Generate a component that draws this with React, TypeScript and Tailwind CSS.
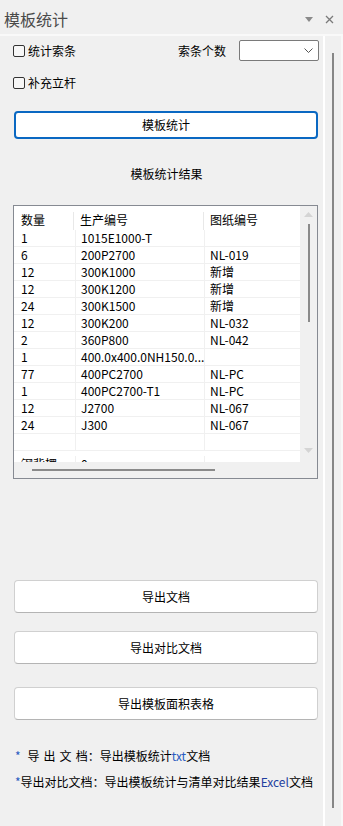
import React from "react";

const rows = [
  ["1", "1015E1000-T", ""],
  ["6", "200P2700", "NL-019"],
  ["12", "300K1000", "新增"],
  ["12", "300K1200", "新增"],
  ["24", "300K1500", "新增"],
  ["12", "300K200", "NL-032"],
  ["2", "360P800", "NL-042"],
  ["1", "400.0x400.0NH150.0...", ""],
  ["77", "400PC2700", "NL-PC"],
  ["1", "400PC2700-T1", "NL-PC"],
  ["12", "J2700", "NL-067"],
  ["24", "J300", "NL-067"],
  ["", "", ""],
];

function CheckBox({ label }: { label: string }) {
  return (
    <label className="flex items-center gap-[3px] text-[12px] leading-[16px] text-black">
      <span className="w-[12px] h-[12px] rounded-[2px] border border-[#333] bg-[#f7f7f7]" />
      <span>{label}</span>
    </label>
  );
}

function GrayButton({ label }: { label: string }) {
  return (
    <button className="w-[304px] h-[33px] rounded-[4px] bg-white border border-[#d0d0d0] border-b-[#b4b4b4] text-[12px] text-black">
      {label}
    </button>
  );
}

export default function App() {
  return (
    <div className="w-[343px] h-[826px] bg-[#f0f0f0] flex flex-col overflow-hidden font-['Noto_Sans_CJK_SC',sans-serif] text-black">
      {/* Title bar */}
      <div className="h-[34px] flex items-center pl-[4px] pr-[9px] shrink-0">
        <span className="text-[16px] leading-[20px] text-[#4a4a4a] pt-[4px]">模板统计</span>
        <div className="ml-auto flex items-center gap-[12px] pt-[4px]">
          <svg width="8" height="5" viewBox="0 0 8 5">
            <path d="M0 0 L8 0 L4 5 Z" fill="#8a8a8a" />
          </svg>
          <svg width="9" height="9" viewBox="0 0 9 9">
            <path d="M1 1 L8 8 M8 1 L1 8" stroke="#7a7a7a" strokeWidth="1.3" />
          </svg>
        </div>
      </div>
      <div className="h-[2px] bg-[#f9f9f9] shrink-0" />

      <div className="flex flex-1">
        {/* Main content */}
        <div className="w-[323px] flex flex-col pl-[13px]">
          <div className="mt-[4px] h-[21px] flex items-center">
            <CheckBox label="统计索条" />
            <span className="ml-auto text-[12px] leading-[16px] mr-[13px]">索条个数</span>
            <div className="w-[80px] h-[21px] bg-white border border-[#7a7a7a] rounded-[2px] flex items-center justify-end pr-[5px] mr-[4px]">
              <svg width="9" height="5" viewBox="0 0 9 5">
                <path d="M0.5 0.5 L4.5 4.5 L8.5 0.5" stroke="#555" strokeWidth="1" fill="none" />
              </svg>
            </div>
          </div>

          <div className="mt-[14px] h-[16px] flex items-center">
            <CheckBox label="补充立杆" />
          </div>

          <button className="mt-[20px] ml-px w-[304px] h-[28px] rounded-[4px] bg-white border-2 border-[#0a68c2] text-[12px] text-black">
            模板统计
          </button>

          <div className="mt-[27px] h-[16px] text-center text-[12px] leading-[16px] pr-[3px]">模板统计结果</div>

          {/* Result table */}
          <div className="mt-[23px] w-[305px] h-[274px] border border-[#868a92] bg-white flex">
            <div className="w-[286px] flex flex-col">
              <div className="h-[24px] flex text-[12px] leading-[16px] pt-[6px] shrink-0">
                <div className="w-[60px] pl-[7px] border-r border-[#e8e8e8]">数量</div>
                <div className="w-[130px] pl-[6px] border-r border-[#e8e8e8]">生产编号</div>
                <div className="flex-1 pl-[6px]">图纸编号</div>
              </div>
              <div className="flex-1 overflow-hidden">
                {rows.map((r, i) => (
                  <div key={i} className="h-[17px] flex text-[12px] leading-[16px] border-b border-[#f0f0f0]">
                    <div className="w-[62px] pl-[7px] border-r border-[#f0f0f0]">{r[0]}</div>
                    <div className="w-[129px] pl-[5px] border-r border-[#f0f0f0] whitespace-nowrap">{r[1]}</div>
                    <div className="flex-1 pl-[5px]">{r[2]}</div>
                  </div>
                ))}
                <div className="h-[17px] flex text-[12px] leading-[16px] pt-[5px]">
                  <div className="w-[62px] pl-[7px] border-r border-[#f0f0f0]">钢背楞</div>
                  <div className="w-[129px] pl-[5px] border-r border-[#f0f0f0]">0</div>
                  <div className="flex-1" />
                </div>
              </div>
              <div className="h-[16px] bg-[#f0f0f0] flex items-center shrink-0">
                <div className="ml-[18px] w-[183px] h-[2px] bg-[#8a8a8a]" />
              </div>
            </div>
            <div className="w-[17px] bg-[#f0f0f0] flex flex-col items-center">
              <svg className="mt-[6px]" width="9" height="5" viewBox="0 0 9 5">
                <path d="M0 5 L4.5 0 L9 5 Z" fill="#d4d4d4" />
              </svg>
              <div className="mt-[7px] w-[2px] h-[98px] bg-[#8a8a8a]" />
              <svg className="mt-[126px]" width="9" height="5" viewBox="0 0 9 5">
                <path d="M0 0 L4.5 5 L9 0 Z" fill="#d4d4d4" />
              </svg>
            </div>
          </div>

          <div className="mt-[101px] flex flex-col ml-px">
            <GrayButton label="导出文档" />
            <div className="mt-[18px]">
              <GrayButton label="导出对比文档" />
            </div>
            <div className="mt-[23px]">
              <GrayButton label="导出模板面积表格" />
            </div>
          </div>

          <div className="mt-[23px] pl-[2px] text-[12px] leading-[26px]">
            <div className="whitespace-nowrap">
              <span className="text-[#2a5bc0]">*</span>
              <span className="ml-[7px] tracking-[4px]">导出文</span>
              <span>档：导出模板统计</span>
              <span className="text-[#2a5bc0]">txt</span>
              <span>文档</span>
            </div>
            <div className="whitespace-nowrap">
              <span className="text-[#2a5bc0]">*</span>
              <span>导出对比文档：导出模板统计与清单对比结果</span>
              <span className="text-[#1f3f9f]">Excel</span>
              <span>文档</span>
            </div>
          </div>
        </div>

        {/* Panel scrollbar */}
        <div className="w-[20px] flex">
          <div className="w-[2px] bg-white" />
          <div className="w-[16px] flex justify-center">
            <div className="mt-[17px] w-[2px] h-[755px] bg-[#868686]" />
          </div>
          <div className="w-[2px] bg-[#f8f8f8]" />
        </div>
      </div>
    </div>
  );
}
